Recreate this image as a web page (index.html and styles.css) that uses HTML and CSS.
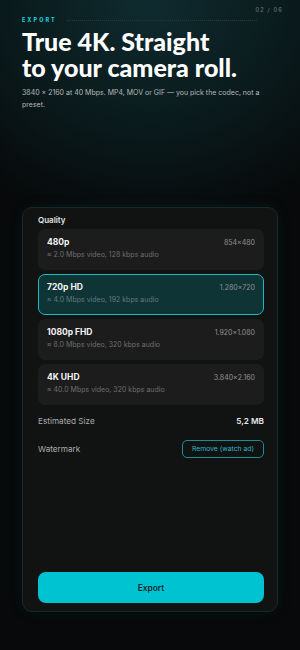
FILE: index.html
```html
<!DOCTYPE html>
<html lang="en">
<head>
    <meta charset="UTF-8">
    <title>Export</title>
    <link rel="stylesheet" href="styles.css">
</head>
<body>
    <div class="screen">
        <div class="step">02 / 06</div>
        <div class="eyebrow">
            <span>EXPORT</span>
            <i class="dots"></i>
        </div>
        <h1><span>True 4K. Straight</span><span>to your camera roll.</span></h1>
        <p class="lead">3840 × 2160 at 40 Mbps. MP4, MOV or GIF — you pick the codec, not a preset.</p>

        <div class="panel">
            <div class="label">Quality</div>
            <ul class="options">
                <li>
                    <div class="row"><b>480p</b><span>854×480</span></div>
                    <small>≈ 2.0 Mbps video, 128 kbps audio</small>
                </li>
                <li class="on">
                    <div class="row"><b>720p HD</b><span>1.280×720</span></div>
                    <small>≈ 4.0 Mbps video, 192 kbps audio</small>
                </li>
                <li>
                    <div class="row"><b>1080p FHD</b><span>1.920×1.080</span></div>
                    <small>≈ 8.0 Mbps video, 320 kbps audio</small>
                </li>
                <li>
                    <div class="row"><b>4K UHD</b><span>3.840×2.160</span></div>
                    <small>≈ 40.0 Mbps video, 320 kbps audio</small>
                </li>
            </ul>
            <div class="info size">
                <span>Estimated Size</span>
                <b>5,2 MB</b>
            </div>
            <div class="info">
                <span>Watermark</span>
                <button class="ghost">Remove (watch ad)</button>
            </div>
            <button class="export">Export</button>
        </div>
    </div>
</body>
</html>
```

FILE: styles.css
```css
*{
    padding: 0;
    margin: 0;
    box-sizing: border-box;
}
li{
    list-style: none;
}
body{
    width: 300px;
    height: 650px;
    overflow: hidden;
    font-family: Inter, "Noto Sans", sans-serif;
    color: #fff;
    background: #07090a radial-gradient(ellipse 260px 230px at 150px 0px, #0f2b2f 0%, #0a1a1c 55%, #07090a 100%);
}
.screen{
    height: 650px;
    padding: 0 22px;
    display: flex;
    flex-direction: column;
}
.step{
    align-self: flex-end;
    margin: 7px -5px 0 0;
    font-size: 5.5px;
    letter-spacing: 1.2px;
    color: #5b6a6d;
    font-weight: 600;
}
.eyebrow{
    display: flex;
    align-items: center;
    gap: 10px;
    margin-top: 3px;
    height: 8px;
}
.eyebrow span{
    font-size: 5.5px;
    font-weight: 800;
    letter-spacing: 2px;
    color: #1ec4d4;
}
.dots{
    width: 190px;
    border-top: 1px dotted #24393c;
}
h1{
    margin-top: 4px;
    font-family: Lato, Inter, sans-serif;
    font-size: 25px;
    line-height: 26px;
    font-weight: 900;
}
h1 span{
    display: block;
}
.lead{
    margin-top: 7px;
    font-size: 7px;
    line-height: 12px;
    color: #b3babb;
}

.panel{
    margin-top: 96px;
    height: 405px;
    border: 1px solid #142a2c;
    border-radius: 10px;
    background: #111212;
    box-shadow: 0 0 14px rgba(20, 80, 85, 0.15);
    padding: 7px 13px 8px 15px;
    display: flex;
    flex-direction: column;
}
.label{
    font-size: 8px;
    font-weight: 600;
    color: #e3e5e5;
    line-height: 10px;
}
.options{
    margin-top: 4px;
    display: flex;
    flex-direction: column;
    gap: 4.5px;
}
.options li{
    height: 40.5px;
    border-radius: 7px;
    background: #1c1c1d;
    border: 1.5px solid transparent;
    padding: 6px 8px 0 8px;
}
.options li.on{
    background: #0f3435;
    border-color: #1fb8c3;
}
.row{
    display: flex;
    justify-content: space-between;
    align-items: center;
    height: 12px;
}
.row b{
    font-size: 8.5px;
    font-weight: 700;
    color: #f4f4f4;
}
.row span{
    font-size: 7px;
    color: #8e9293;
}
.options small{
    display: block;
    margin-top: 2px;
    font-size: 7px;
    color: #6b6f70;
}
.on small{
    color: #5f7a7b;
}
.info{
    display: flex;
    justify-content: space-between;
    align-items: center;
    height: 18px;
    font-size: 8.2px;
    color: #a9adad;
}
.size{
    margin-top: 7px;
}
.info + .info{
    margin-top: 10px;
}
.info b{
    color: #e6e8e8;
    font-weight: 600;
}
.ghost{
    font-family: inherit;
    height: 18px;
    width: 82px;
    border: 1px solid #1a8e97;
    border-radius: 5px;
    background: transparent;
    color: #2ab9c5;
    font-size: 6.8px;
}
.export{
    margin-top: auto;
    height: 31px;
    border: none;
    border-radius: 8px;
    background: #00c3d2;
    font-family: inherit;
    font-size: 8.3px;
    font-weight: 600;
    color: #0d272b;
}
```
